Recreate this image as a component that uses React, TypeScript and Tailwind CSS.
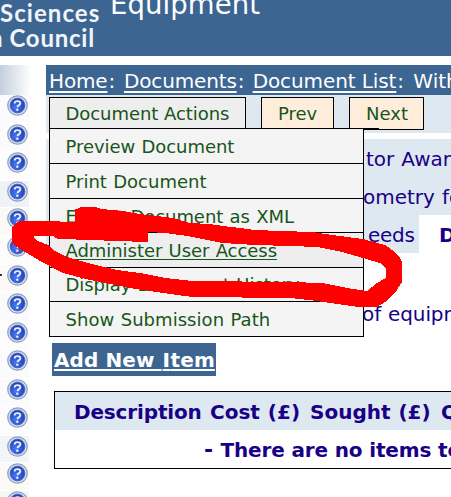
import React from 'react';

const helpRows = [
  { h: 'h-[29px]', bg: 'bg-[#fbfbfd]' },
  { h: 'h-[28px]', bg: 'bg-[#fcfbfb]' },
  { h: 'h-[29px]', bg: 'bg-[#fdfdfe]' },
  { h: 'h-[27px]', bg: 'bg-[#f0f3f6]' },
  { h: 'h-[28px]', bg: 'bg-[#fbf9f7]' },
  { h: 'h-[29px]', bg: 'bg-[#fcfcfd]' },
  { h: 'h-[28px]', bg: 'bg-[#fcf9f7]' },
  { h: 'h-[29px]', bg: 'bg-[#fafafd]' },
  { h: 'h-[28px]', bg: 'bg-[#fcfcfd]' },
  { h: 'h-[29px]', bg: 'bg-[#fbfbfc]' },
  { h: 'h-[28px]', bg: 'bg-[#fbfbfd]' },
  { h: 'h-[29px]', bg: 'bg-[#fcfcfe]' },
  { h: 'h-[27px]', bg: 'bg-[#f2f5f7]' },
  { h: 'h-[28px]', bg: 'bg-[#fbfaf7]' },
  { h: 'h-[28px]', bg: 'bg-[#f5f7f9]' },
];

const menuItems = [
  { label: 'Preview Document', cls: 'h-[35px] leading-[35px] bg-[#f4f4f4] tracking-[-0.05px]' },
  { label: 'Print Document', cls: 'h-[35px] leading-[35px] bg-[#f4f4f4]' },
  { label: 'Export Document as XML', cls: 'h-[34px] leading-[35px] bg-[#f4f4f4] tracking-[-0.05px]' },
  { label: 'Administer User Access', cls: 'h-[35px] leading-[35px] bg-[#eeeeee] tracking-[-0.05px] underline decoration-1 underline-offset-[2px]' },
  { label: 'Display Document History', cls: 'h-[34px] leading-[33px] bg-[#f4f4f4] tracking-[-0.1px]' },
  { label: 'Show Submission Path', cls: 'h-[35px] leading-[35px] bg-[#f4f4f4] tracking-[0.05px]' },
];

function HelpIcon() {
  return (
    <svg width="21" height="21" viewBox="0 0 22 22" className="block shrink-0">
      <defs>
        <radialGradient id="ball" cx="0.4" cy="0.65" r="0.7">
          <stop offset="0" stopColor="#4a7df0" />
          <stop offset="0.6" stopColor="#2a50cf" />
          <stop offset="1" stopColor="#2343b0" />
        </radialGradient>
      </defs>
      <circle cx="11" cy="11" r="10.2" fill="#dde4f0" stroke="#8c9dc0" strokeWidth="1.3" />
      <circle cx="11" cy="11" r="7.8" fill="url(#ball)" stroke="#4b66ae" strokeWidth="0.9" />
      <path d="M8 8.9C8.1 5.7 14 5.7 14 8.6C14 10.6 11.2 10.6 11 12.7" fill="none" stroke="#e8eeff" strokeWidth="2" />
      <circle cx="10.8" cy="15.4" r="1.25" fill="#e8eeff" />
    </svg>
  );
}

function Sidebar() {
  return (
    <aside className="w-[46px] shrink-0">
      <div className="h-[30px] w-[31px] bg-linear-to-r from-[#c3d0dc] to-white" />
      {helpRows.map((r, i) => (
        <div key={i} className={`${r.h} relative w-[29px] border-b border-white pl-[7px] ${r.bg}`}>
          {i === 6 && <span className="absolute left-0 top-[9px] h-[2px] w-[2px] bg-[#333]" />}
          <HelpIcon />
        </div>
      ))}
    </aside>
  );
}

function ActionsMenu() {
  return (
    <div className="absolute left-[3px] top-[33px] z-10 w-[315px] border border-b-0 border-black text-[18px] text-[#17551b] [word-spacing:0.034em]">
      {menuItems.map((m) => (
        <div key={m.label} className={`${m.cls} border-b border-black pl-[15.5px]`}>
          {m.label}
        </div>
      ))}
    </div>
  );
}

function Scribble() {
  return (
    <svg className="absolute left-0 top-0 z-20" width="451" height="497" viewBox="0 0 451 497" shapeRendering="crispEdges">
      <path
        fill="#ff0000"
        fillRule="evenodd"
        d="M12 228L17 222L22 221H59L60 222H75V209L80 208V207H97V208L102 209L123 211L140 214L173 218L190 223L210 224L223 226L240 228L255 230L280 231L313 232L332 235L363 239L385 245L395 252L400 258L402 262V282L395 293L385 302L377 307H358L330 303L309 300L290 298L193 297L177 295L150 291L130 288L90 280L63 273L42 262L25 252L14 245L12 241Z
        M33 237L35 236H53L58 239L93 240L115 241L148 242V232L165 233L188 236L207 240L223 243L255 245L290 246L317 247L342 252L363 258L380 263L386 268V278L377 283L367 291L347 288L322 283L290 282L193 281L165 278L140 273L117 270L88 263L67 257L53 250L48 245L38 241Z"
      />
    </svg>
  );
}

export default function App() {
  return (
    <div className="relative h-[497px] w-[451px] overflow-hidden bg-white font-['DejaVu_Sans',sans-serif]">
      <header className="flex h-[56px] overflow-hidden bg-[#3d6591] text-white">
        <div className="w-[110px] shrink-0 font-['Lato',sans-serif] text-[24px] font-bold leading-[25px] text-[#f0f5fa]">
          <div className="whitespace-nowrap tracking-[1.05px]">Sciences</div>
          <div className="-ml-[11px] flex whitespace-nowrap tracking-[0.75px]">
            <span className="w-[20.5px] shrink-0">h</span>
            <span>Council</span>
          </div>
        </div>
        <h1 className="-mt-[12px] whitespace-nowrap text-[27.5px] leading-[32px] tracking-[0.1px]">Equipment</h1>
      </header>
      <div className="mt-[9px] flex">
        <Sidebar />
        <main className="relative w-[405px] shrink-0 text-[20px] text-[#190087]">
          <nav className="flex h-[30px] whitespace-nowrap bg-[#3d6591] pl-[3px] leading-[32px] text-white *:shrink-0">
            <a className="tracking-[-0.15px] underline decoration-2 underline-offset-[3px]">Home</a>
            <span className="w-[16.5px] pl-px">:</span>
            <a className="tracking-[-0.15px] underline decoration-2 underline-offset-[3px]">Documents</a>
            <span className="w-[16px] pl-px">:</span>
            <a className="tracking-[-0.1px] underline decoration-2 underline-offset-[3px]">Document List</a>
            <span className="w-[17px] pl-px">:</span>
            <span>With</span>
          </nav>
          <div className="relative flex h-[38px] gap-[15px] bg-[#dee8f0] pl-[3px] pt-[2px] text-[18px] leading-[32px] text-[#17551b]">
            <div className="h-[33px] w-[197px] border border-black bg-[#eeeeee] pl-[15.5px] tracking-[-0.05px]">Document Actions</div>
            <div className="h-[33px] w-[73px] border border-black bg-[#ffeddc] pl-[16px]">Prev</div>
            <div className="h-[33px] w-[75px] border border-black bg-[#ffeddc] pl-[16px]">Next</div>
            <div className="absolute left-[3px] top-[33px] h-px w-[330px] bg-black" />
            <ActionsMenu />
          </div>
          <section className="mt-[6px] h-[204px] overflow-hidden whitespace-nowrap">
            <div className="h-[76px] bg-[#dee8f0]">
              <div className="pl-[320px] leading-[40px] [word-spacing:0.034em]">tor Award</div>
              <div className="pl-[317px] leading-[36px] [word-spacing:0.034em]">ometry for</div>
            </div>
            <div className="flex h-[38px] leading-[40px] *:shrink-0">
              <div className="w-[373px] bg-[#dee8f0] pl-[322px] tracking-[-0.3px]">eeds</div>
              <div className="pl-[20px] font-bold">De</div>
            </div>
            <div className="mt-[41px] pl-[316px] leading-[41px] tracking-[-0.1px] [word-spacing:0.034em]">of equipment</div>
          </section>
          <a className="ml-[6px] block h-[33px] w-[164px] whitespace-nowrap bg-[#3d6591] pl-[2px] font-bold leading-[34px] tracking-[0.1px] text-white underline decoration-2 underline-offset-[2px]">
            Add New <span className="pl-px font-['Open_Sans',sans-serif] font-extrabold leading-none tracking-[1px]">I</span>tem
          </a>
          <section className="ml-[8px] mt-[15px] h-[78px] w-[420px] border border-black font-bold">
            <div className="flex h-[38px] whitespace-nowrap bg-[#dee8f0] pl-[19px] leading-[40px] *:shrink-0">
              <span className="w-[136px] tracking-[-0.15px]">Description</span>
              <span className="w-[100px] [word-spacing:0.05em]">Cost (£)</span>
              <span className="w-[131px] [word-spacing:0.05em]">Sought (£)</span>
              <span>Qty</span>
            </div>
            <div className="flex whitespace-nowrap pl-[149px] leading-[40px] tracking-[-0.15px]">
              <span className="w-[16.5px] shrink-0 text-[22px]">-</span>
              <span>There are no items to</span>
            </div>
          </section>
        </main>
      </div>
      <Scribble />
    </div>
  );
}
